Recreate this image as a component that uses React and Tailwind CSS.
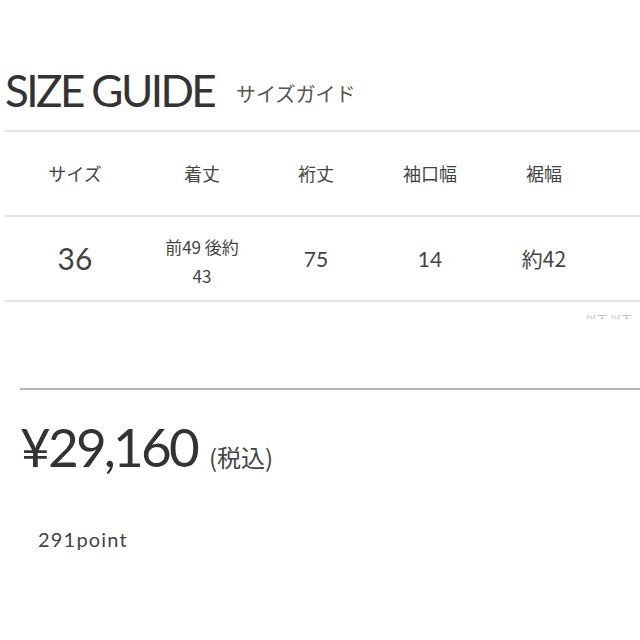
const jp = { fontFamily: '"Noto Sans CJK JP", "Noto Sans", sans-serif' };
const latin = { fontFamily: 'Lato, "Noto Sans CJK JP", sans-serif' };

const heads = ["サイズ", "着丈", "裄丈", "袖口幅", "裾幅"];

const App = () => {
  return (
    <div className="bg-white w-[640px] h-[640px] overflow-hidden text-[#3a3a3a]">
      <div className="pt-[64px] pl-[5px] flex items-end gap-[22px]">
        <h1 className="text-[44px] leading-[52px] tracking-[-2.6px] text-[#333]" style={latin}>
          SIZE GUIDE
        </h1>
        <span className="text-[20px] leading-[24px] mb-[10px] text-[#555]" style={jp}>
          サイズガイド
        </span>
      </div>

      <div className="mt-[14px] ml-[5px] border-t-2 border-[#e2e2e2]">
        <div className="flex h-[83px] items-center text-[18px] text-[#444]" style={jp}>
          {heads.map((h, i) => (
            <div key={h} className={i === 0 ? "w-[140px] text-center" : "w-[114px] text-center"}>
              {h}
            </div>
          ))}
        </div>
        <div className="border-t-2 border-[#e2e2e2] flex h-[85px] items-center text-[#444]" style={latin}>
          <div className="w-[140px] text-center text-[30px]">36</div>
          <div className="w-[114px] text-center text-[17px] leading-[29px] pt-[4px]" style={jp}>
            前49 後約
            <br />
            43
          </div>
          <div className="w-[114px] text-center text-[21px]">75</div>
          <div className="w-[114px] text-center text-[21px]">14</div>
          <div className="w-[114px] text-center text-[21px]" style={jp}>約42</div>
        </div>
        <div className="border-t-2 border-[#e2e2e2] h-[20px] flex justify-end pr-[8px]">
          <div className="h-[4px] mt-[13px] overflow-hidden text-[11px] leading-[8px] text-[#bbb]" style={jp}>
            以下 以下
          </div>
        </div>
      </div>

      <div className="mt-[68px] ml-[20px] border-t-2 border-[#b5b5b5]">
        <div className="flex items-baseline gap-[12px] pt-[27px]" style={latin}>
          <span className="text-[53px] leading-[60px] text-[#333] tracking-[-2.8px]">¥29,160</span>
          <span className="text-[24px] text-[#444]" style={jp}>(税込)</span>
        </div>
        <div className="mt-[47px] ml-[18px] text-[20px] tracking-[1.2px] text-[#444]" style={latin}>
          291point
        </div>
      </div>
    </div>
  );
};

export default App;
